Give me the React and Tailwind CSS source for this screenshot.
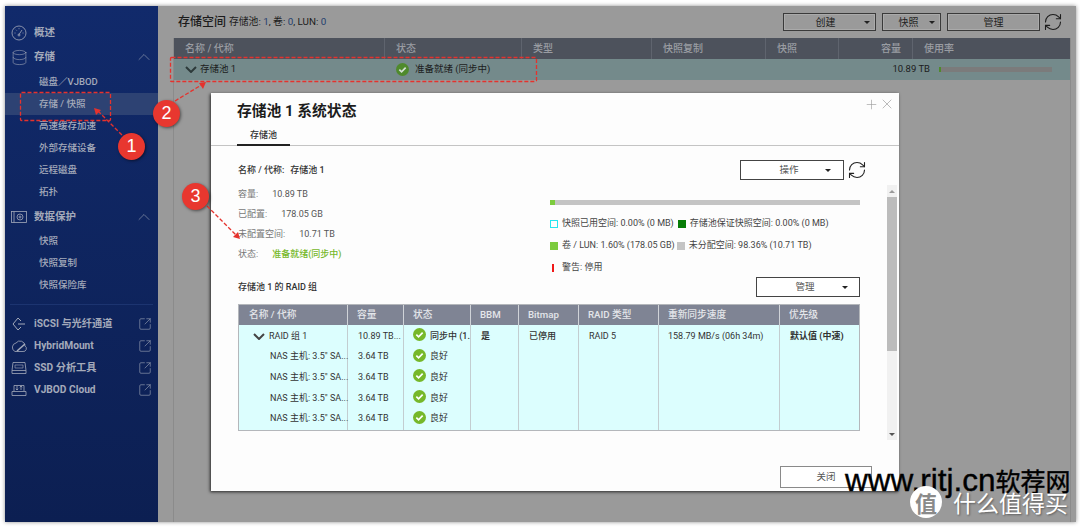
import { ChevronUp, SquareArrowOutUpRight, RefreshCw, Plus, X, Database } from "lucide-react";

const font = "font-['Roboto','Noto_Sans_CJK_SC',sans-serif]";

const CheckDot = ({ dim }) => (
  <svg width="13" height="13" viewBox="0 0 14 14" className={`shrink-0 ${dim ? "" : "-mt-[4px]"}`}>
    <circle cx="7" cy="7" r="7" fill={dim ? "#4f8a2c" : "#76b82a"} />
    <path d="M3.6 7.2 6 9.6l4.4-4.6" fill="none" stroke={dim ? "#d5e0d5" : "#fff"} strokeWidth="1.8" />
  </svg>
);

const Caret = () => <span className="block w-0 h-0 border-x-[3px] border-x-transparent border-t-[3px] border-t-[#222]" />;

const DownMark = ({ color }) => (
  <svg width="12" height="7" viewBox="0 0 12 7" fill="none" stroke={color} strokeWidth="2" className="shrink-0">
    <path d="M1 1l5 5 5-5" />
  </svg>
);

const GaugeIcon = () => (
  <svg width="16" height="16" viewBox="0 0 16 16" fill="none" stroke="currentColor" strokeWidth="0.8">
    <circle cx="8" cy="8" r="7" />
    <path d="M8 9.5 11 5" />
    <circle cx="8" cy="10" r="1" />
    <path d="M3.5 8h1M5 4.8l.7.7M8 3.2v1M12.5 8h-1" />
  </svg>
);

const SnapIcon = () => (
  <svg width="16" height="14" viewBox="0 0 16 14" fill="none" stroke="currentColor" strokeWidth="0.8">
    <rect x="0.5" y="1.5" width="15" height="11" />
    <path d="M3 1.5v11" />
    <circle cx="9" cy="7" r="3" />
    <circle cx="9" cy="7" r="1" />
  </svg>
);

const IscsiIcon = () => (
  <svg width="16" height="14" viewBox="0 0 16 14" fill="none" stroke="currentColor" strokeWidth="1">
    <path d="M7 1 2 7l5 6M7 1l3 3M7 13l3-3M7 7h7" />
  </svg>
);

const CloudIcon = () => (
  <svg width="16" height="14" viewBox="0 0 16 14" fill="none" stroke="currentColor" strokeWidth="0.8">
    <path d="M4 12.5h8a3 3 0 0 0 2-5.5 5 5 0 0 0-9-3 4.5 4.5 0 0 0-1 8.5z" />
    <path d="M6 12 14 5" strokeWidth="1.6" />
  </svg>
);

const SsdIcon = () => (
  <svg width="16" height="14" viewBox="0 0 16 14" fill="none" stroke="currentColor" strokeWidth="0.8">
    <path d="M2 1.5h12l1 8v3H1v-3z" />
    <path d="M1 9.5h14" />
    <path d="M4 4h8v3H4z" strokeWidth="0.6" />
  </svg>
);

const VjbodIcon = () => (
  <svg width="16" height="14" viewBox="0 0 16 14" fill="none" stroke="currentColor" strokeWidth="0.8">
    <path d="M3 8V2.5h10V8M1 8.5h14v4H1z" />
    <path d="M6 3v4M4.8 5.8 6 7l1.2-1.2M10 7V3M8.8 4.2 10 3l1.2 1.2" />
  </svg>
);

const NavHead = ({ icon, label, open }) => (
  <div className="h-[22px] flex items-center pl-[4px] pr-[4px] text-[#a4aaba]">
    <span className="w-[20px] flex justify-center">{icon}</span>
    <span className="ml-[5px] flex-1 text-[10.5px] font-bold">{label}</span>
    {open && <ChevronUp size={20} strokeWidth={0.7} />}
  </div>
);

const NavItem = ({ label, active }) => (
  <div className={`h-[22px] flex items-center pl-[34px] text-[9.5px] font-medium text-[#a4aaba] ${active ? "bg-[#2d4273]" : ""}`}>
    {label}
  </div>
);

const NavLink = ({ icon, label }) => (
  <div className="h-[22px] flex items-center pl-[4px] pr-[6px] text-[#a4aaba]">
    <span className="w-[20px] flex justify-center">{icon}</span>
    <span className="ml-[5px] flex-1 text-[10.2px] font-bold">{label}</span>
    <SquareArrowOutUpRight size={14} strokeWidth={1} />
  </div>
);

const Sidebar = () => (
  <aside className="w-[153px] shrink-0 bg-gradient-to-b from-[#112a6b] to-[#0c1f52] pt-[16px]">
    <NavHead icon={<GaugeIcon />} label="概述" />
    <div className="mt-[2px]">
      <NavHead icon={<Database size={17} strokeWidth={0.8} />} label="存储" open />
    </div>
    <div className="mt-[3px]">
      <NavItem label="磁盘／VJBOD" />
      <NavItem label="存储 / 快照" active />
      <NavItem label="高速缓存加速" />
      <NavItem label="外部存储设备" />
      <NavItem label="远程磁盘" />
      <NavItem label="拓扑" />
    </div>
    <div className="mt-[3px]">
      <NavHead icon={<SnapIcon />} label="数据保护" open />
    </div>
    <div className="mt-[2px]">
      <NavItem label="快照" />
      <NavItem label="快照复制" />
      <NavItem label="快照保险库" />
    </div>
    <div className="mx-[5px] mt-[8px] mb-[8px] border-t border-[#1c3470]" />
    <NavLink icon={<IscsiIcon />} label="iSCSI 与光纤通道" />
    <NavLink icon={<CloudIcon />} label="HybridMount" />
    <NavLink icon={<SsdIcon />} label="SSD 分析工具" />
    <NavLink icon={<VjbodIcon />} label="VJBOD Cloud" />
  </aside>
);

const topCols = [
  { label: "名称 / 代称", w: "w-[211px]" },
  { label: "状态", w: "w-[137px]" },
  { label: "类型", w: "w-[130px]" },
  { label: "快照复制", w: "w-[114px]" },
  { label: "快照", w: "w-[73px]" },
  { label: "容量", w: "w-[74px]", right: true },
  { label: "使用率", w: "flex-1" },
];

const TopButton = ({ label, w, caret, pad = "" }) => (
  <div className={`${w} ${pad} h-[18px] flex items-center justify-center relative border border-[#3a3a3a] shadow-[inset_0_0_0_1px_#aaa] text-[10px] text-[#222]`}>
    {label}
    {caret && (
      <span className="absolute right-[5px] top-[7px]">
        <Caret />
      </span>
    )}
  </div>
);

const Main = () => (
  <main className="flex-1 bg-[#9a9a9a] pl-[15px] pr-[5px] flex flex-col">
    <div className="h-[32px] flex items-center pl-[5px] pr-[8px]">
      <span className="text-[12px] font-medium text-[#1c1c1c]">存储空间</span>
      <span className="ml-[3px] text-[9.8px] text-[#1c1c1c]">
        存储池: <span className="text-[#24406e]">1</span>, 卷: <span className="text-[#24406e]">0</span>, LUN: <span className="text-[#24406e]">0</span>
      </span>
      <div className="ml-auto flex items-center gap-[6px]">
        <TopButton label="创建" w="w-[93px]" pad="pr-[8px]" caret />
        <TopButton label="快照" w="w-[59px]" pad="pr-[6px]" caret />
        <TopButton label="管理" w="w-[93px]" />
        <RefreshCw size={20} strokeWidth={1.3} className="-ml-[3px] text-[#1c1c1c]" />
      </div>
    </div>
    <div className="flex-1 border-l border-r border-[#8b8b8b]">
      <div className="h-[21px] flex bg-[#4d525c] text-[10px] font-medium text-[#9a9da3]">
        {topCols.map((c) => (
          <div key={c.label} className={`${c.w} flex items-center px-[11px] border-r border-[#5f646e] last:border-r-0 ${c.right ? "justify-end px-[10px]" : ""}`}>
            {c.label}
          </div>
        ))}
      </div>
      <div className="h-[21px] flex items-center bg-[#748a8b] text-[9.5px] text-[#1c1c1c]">
        <div className="w-[211px] flex items-center pl-[11px]">
          <DownMark color="#2d3a3a" />
          <span className="ml-[3px]">存储池 1</span>
        </div>
        <div className="w-[137px] flex items-center gap-[6px] pl-[11px] whitespace-nowrap">
          <CheckDot dim />
          准备就绪 (同步中)
        </div>
        <div className="w-[408px] text-right">10.89 TB</div>
        <div className="ml-[9px] w-[113px] h-[5px] bg-[#7b7b7b]">
          <div className="w-[2px] h-full bg-[#4f8a2c]" />
        </div>
      </div>
    </div>
  </main>
);

const raidCols = [
  { label: "名称 / 代称", w: "w-[109px]", pad: "pl-[10px]" },
  { label: "容量", w: "w-[56px]", pad: "pl-[9px]" },
  { label: "状态", w: "w-[67px]", pad: "pl-[9px]" },
  { label: "BBM", w: "w-[48px]", pad: "pl-[9px]" },
  { label: "Bitmap", w: "w-[60px]", pad: "pl-[9px]" },
  { label: "RAID 类型", w: "w-[80px]", pad: "pl-[9px]" },
  { label: "重新同步速度", w: "w-[121px]", pad: "pl-[9px]" },
  { label: "优先级", w: "flex-1", pad: "pl-[9px]" },
];

const drives = [1, 2, 3, 4];

const Cell = ({ children, className = "" }) => (
  <div className={`h-[20.7px] pt-[2px] flex items-center whitespace-nowrap text-[9px] text-[#333] ${className}`}>{children}</div>
);

const RaidTable = () => (
  <div className="w-[622px] h-[127px] border border-[#b4b7bb] flex flex-col">
    <div className="h-[20px] flex bg-[#7f8494] text-[9.7px] font-medium text-[#e4e6ea]">
      {raidCols.map((c) => (
        <div key={c.label} className={`${c.w} ${c.pad} flex items-center border-r border-[#d0d3d8] last:border-r-0`}>
          {c.label}
        </div>
      ))}
    </div>
    <div className="flex-1 flex bg-[#dcfefe]">
      <div className="w-[109px] border-r border-[#c3cdd0]">
        <Cell className="pl-[14px]">
          <DownMark color="#444" />
          <span className="ml-[4px]">RAID 组 1</span>
        </Cell>
        {drives.map((d) => (
          <Cell key={d} className="pl-[31px]">NAS 主机: 3.5" SA...</Cell>
        ))}
      </div>
      <div className="w-[56px] border-r border-[#c3cdd0] pl-[10px]">
        <Cell>10.89 TB...</Cell>
        {drives.map((d) => (
          <Cell key={d}>3.64 TB</Cell>
        ))}
      </div>
      <div className="w-[67px] border-r border-[#c3cdd0] pl-[9px]">
        <Cell className="gap-[4px] font-medium text-[#222]">
          <CheckDot />
          同步中 (1.
        </Cell>
        {drives.map((d) => (
          <Cell key={d} className="gap-[4px]">
            <CheckDot />
            良好
          </Cell>
        ))}
      </div>
      <div className="w-[48px] border-r border-[#c3cdd0] pl-[10px]">
        <Cell className="font-bold text-[#222]">是</Cell>
      </div>
      <div className="w-[60px] border-r border-[#c3cdd0] pl-[10px]">
        <Cell className="font-medium text-[#222]">已停用</Cell>
      </div>
      <div className="w-[80px] border-r border-[#c3cdd0] pl-[10px]">
        <Cell>RAID 5</Cell>
      </div>
      <div className="w-[121px] border-r border-[#c3cdd0] pl-[9px]">
        <Cell>158.79 MB/s (06h 34m)</Cell>
      </div>
      <div className="flex-1 pl-[10px]">
        <Cell className="font-bold text-[#222]">默认值 (中速)</Cell>
      </div>
    </div>
  </div>
);

const InfoRow = ({ label, gap, children }) => (
  <div className={`h-5 flex items-center text-[9px] text-[#777] ${gap}`}>
    <span>{label}</span>
    {children}
  </div>
);

const Legend = ({ swatch, text, className = "" }) => (
  <span className={`flex items-center gap-[4px] ${className}`}>
    {swatch}
    {text}
  </span>
);

const Dialog = () => (
  <div className="absolute left-[211px] top-[93px] w-[688px] h-[398px] bg-[#fdfdfd] shadow-[-1px_1px_3px_rgba(0,0,0,0.75)] flex flex-col">
    <div className="absolute right-[4px] top-[3px] flex items-center text-[#9a9a9a]">
      <Plus size={15} strokeWidth={1} />
      <X size={16} strokeWidth={1} />
    </div>
    <div className="h-[53px] border-b border-[#c4c4c4] px-[26px] flex flex-col justify-end">
      <div className="text-[14.8px] font-bold text-[#1c1c1c] leading-[20px] mb-[5px]">存储池 1 系统状态</div>
      <div className="w-[53px] h-[20px] pt-[2px] flex items-center justify-center text-[9px] font-medium text-[#333] border-b-2 border-[#222] -mb-px">存储池</div>
    </div>
    <div className="pl-[27px] pr-[27px]">
      <div className="h-[131px] flex pt-[14px]">
        <div className="w-[312px] pt-[1px]">
          <div className="h-5 flex items-center text-[9px] font-medium text-[#333]">
            名称 / 代称:<span className="ml-[6px]">存储池 1</span>
          </div>
          <div className="mt-[4px]">
            <InfoRow label="容量:" gap="gap-[14px]"><span className="text-[#555]">10.89 TB</span></InfoRow>
            <InfoRow label="已配置:" gap="gap-[14px]"><span className="text-[#555]">178.05 GB</span></InfoRow>
            <InfoRow label="未配置空间:" gap="gap-[14px]"><span className="text-[#555]">10.71 TB</span></InfoRow>
            <InfoRow label="状态:" gap="gap-[14px]"><span className="font-medium text-[#76b82a]">准备就绪(同步中)</span></InfoRow>
          </div>
        </div>
        <div className="w-[310px]">
          <div className="h-5 flex items-center justify-end -mr-[7px] gap-[3px]">
            <div className="w-[104px] h-5 pr-[6px] relative border border-[#444] flex items-center justify-center text-[9.5px] text-[#555] bg-white">
              操作
              <span className="absolute right-[12px] top-[8px]"><Caret /></span>
            </div>
            <RefreshCw size={20} strokeWidth={1.3} className="text-[#222]" />
          </div>
          <div className="mt-[20px] h-[5px] bg-[#c4c4c4]">
            <div className="w-[5px] h-full bg-[#7ccb3e]" />
          </div>
          <div className="mt-[8px] text-[9px] text-[#444]">
            <div className="h-[22px] flex items-center whitespace-nowrap">
              <Legend swatch={<span className="w-[8px] h-[8px] border border-[#25e5f0]" />} text="快照已用空间: 0.00% (0 MB)" />
              <Legend className="ml-[4px]" swatch={<span className="w-[8px] h-[8px] bg-[#067c06]" />} text="存储池保证快照空间: 0.00% (0 MB)" />
            </div>
            <div className="h-[22px] flex items-center whitespace-nowrap">
              <Legend swatch={<span className="w-[8px] h-[8px] bg-[#7ccb3e]" />} text="卷 / LUN: 1.60% (178.05 GB)" />
              <Legend className="ml-[2px]" swatch={<span className="w-[8px] h-[8px] bg-[#c4c4c4]" />} text="未分配空间: 98.36% (10.71 TB)" />
            </div>
            <div className="h-[22px] flex items-center">
              <Legend swatch={<span className="w-[2px] h-[8px] ml-[2px] mr-[4px] bg-[#f01818]" />} text="警告: 停用" />
            </div>
          </div>
        </div>
      </div>
      <div className="w-[622px] h-5 flex items-center justify-between">
        <span className="pt-[2px] text-[9px] font-medium text-[#333]">存储池 1 的 RAID 组</span>
        <div className="w-[104px] h-5 pr-[6px] relative border border-[#444] flex items-center justify-center text-[9.5px] text-[#555] bg-white">
          管理
          <span className="absolute right-[11px] top-[8px]"><Caret /></span>
        </div>
      </div>
      <div className="mt-[7px]">
        <RaidTable />
      </div>
      <div className="mt-[35px] flex justify-end">
        <div className="w-[92px] h-[22px] border border-[#8a8a8a] flex items-center justify-center text-[9.5px] text-[#555] bg-white">关闭</div>
      </div>
    </div>
    <div className="absolute left-[676px] top-[92px] w-[10px] h-[255px] bg-[#f1f1f1] flex flex-col">
      <div className="h-[12px] flex items-center justify-center">
        <span className="w-0 h-0 border-x-[3px] border-x-transparent border-b-[3px] border-b-[#999]" />
      </div>
      <div className="h-[154px] bg-[#bcbcbc]" />
      <div className="mt-auto h-[12px] flex items-center justify-center">
        <span className="w-0 h-0 border-x-[3px] border-x-transparent border-t-[3px] border-t-[#555]" />
      </div>
    </div>
  </div>
);

const Badge = ({ n, className }) => (
  <div className={`absolute w-[27px] h-[27px] rounded-full bg-[#e8372f] shadow-[1px_1px_3px_rgba(0,0,0,0.5)] flex items-center justify-center text-[18px] font-['Liberation_Sans',sans-serif] text-white ${className}`}>
    {n}
  </div>
);

const Annotations = () => (
  <>
    <svg className="absolute left-0 top-0" width="1080" height="527" fill="none" stroke="#e5322d" strokeWidth="1.3" strokeDasharray="4 2">
      <rect x="20.5" y="92.5" width="90" height="28" rx="1" />
      <rect x="170.5" y="57.5" width="366" height="24" rx="1" />
      <path d="M122 135 98 111" />
      <path d="M175 101 203 84" />
      <path d="M207 206 238 237" />
      <path d="M94 108l7 2-5 5z" fill="#e5322d" stroke="none" />
      <path d="M206 82l-3 7-4-6z" fill="#e5322d" stroke="none" />
      <path d="M240 239l-7-2 5-5z" fill="#e5322d" stroke="none" />
    </svg>
    <Badge n="1" className="left-[118px] top-[133px]" />
    <Badge n="2" className="left-[153px] top-[100px]" />
    <Badge n="3" className="left-[182px] top-[183px]" />
  </>
);

const Watermark = () => (
  <>
    <div className="absolute left-[845px] top-[463px] flex items-baseline text-[31.5px] leading-[34px] font-['Liberation_Sans',sans-serif] text-black whitespace-nowrap [-webkit-text-stroke:0.4px_black]">
      www.rjtj.cn
      <span className="text-[25px] font-['Noto_Sans_CJK_SC',sans-serif]">软荐网</span>
    </div>
    <div className="absolute left-[910px] top-[486px] w-[32px] h-[32px] rounded-full bg-white flex items-center justify-center text-[22px] font-bold font-['Noto_Sans_CJK_SC',sans-serif] text-[#8a8a8a]">
      值
    </div>
    <div className="absolute left-[953px] top-[485px] text-[23px] leading-[34px] font-['Noto_Sans_CJK_SC',sans-serif] text-white whitespace-nowrap [text-shadow:1px_1px_2px_rgba(0,0,0,0.4)]">
      什么值得买
    </div>
  </>
);

export default function App() {
  return (
    <div className={`${font} relative w-[1080px] h-[527px] overflow-hidden bg-white pt-[6px] pl-[5px] pr-[4px] pb-[5px]`}>
      <div className="h-full flex shadow-[0_0_4px_rgba(0,0,0,0.45)]">
        <Sidebar />
        <Main />
      </div>
      <Dialog />
      <Annotations />
      <Watermark />
    </div>
  );
}
